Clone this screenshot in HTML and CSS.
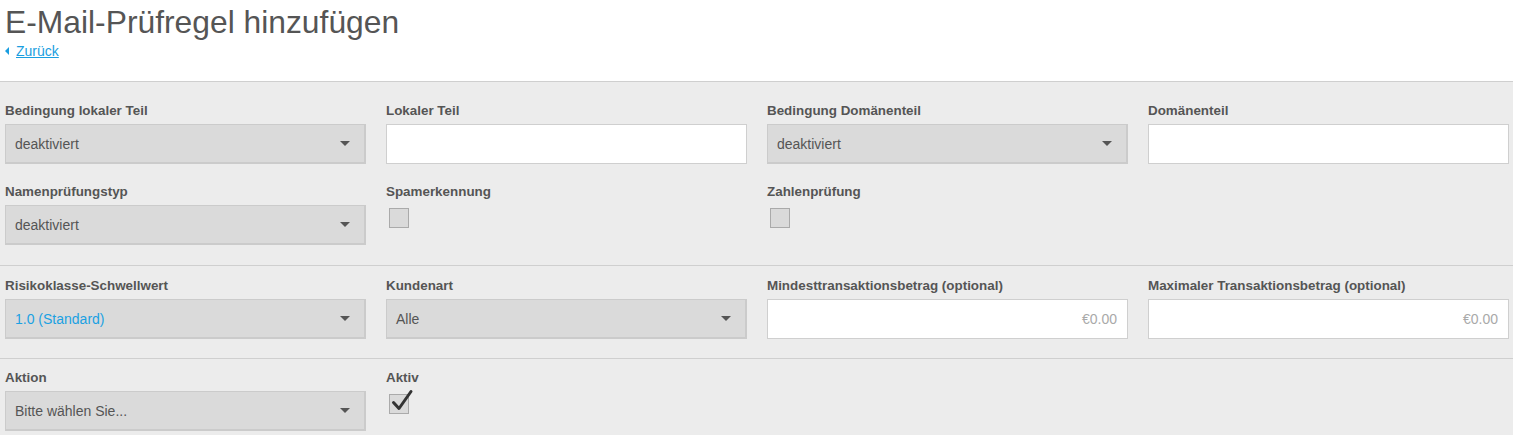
FILE: index.html
```html
<!DOCTYPE html>
<html lang="de">
<head>
<meta charset="utf-8">
<title>E-Mail-Prüfregel hinzufügen</title>
<link rel="stylesheet" href="styles.css">
</head>
<body>
<header class="page-head">
  <h1 class="title">E-Mail-Prüfregel hinzufügen</h1>
  <a class="back" href="#"><span class="back-arrow"></span><span class="back-text">Zurück</span></a>
</header>
<main class="form">
  <section class="section first">
    <div class="grid">
      <div class="field">
        <label class="label">Bedingung lokaler Teil</label>
        <div class="select"><span class="select-value">deaktiviert</span><span class="caret"></span></div>
      </div>
      <div class="field">
        <label class="label">Lokaler Teil</label>
        <div class="input"></div>
      </div>
      <div class="field">
        <label class="label">Bedingung Domänenteil</label>
        <div class="select"><span class="select-value">deaktiviert</span><span class="caret"></span></div>
      </div>
      <div class="field">
        <label class="label">Domänenteil</label>
        <div class="input"></div>
      </div>
      <div class="field">
        <label class="label">Namenprüfungstyp</label>
        <div class="select"><span class="select-value">deaktiviert</span><span class="caret"></span></div>
      </div>
      <div class="field">
        <label class="label">Spamerkennung</label>
        <div class="checkbox"></div>
      </div>
      <div class="field">
        <label class="label">Zahlenprüfung</label>
        <div class="checkbox"></div>
      </div>
    </div>
  </section>
  <section class="section">
    <div class="grid">
      <div class="field">
        <label class="label">Risikoklasse-Schwellwert</label>
        <div class="select"><span class="select-value blue">1.0 (Standard)</span><span class="caret"></span></div>
      </div>
      <div class="field">
        <label class="label">Kundenart</label>
        <div class="select"><span class="select-value">Alle</span><span class="caret"></span></div>
      </div>
      <div class="field">
        <label class="label">Mindesttransaktionsbetrag (optional)</label>
        <div class="input"><span class="placeholder">€0.00</span></div>
      </div>
      <div class="field">
        <label class="label">Maximaler Transaktionsbetrag (optional)</label>
        <div class="input"><span class="placeholder">€0.00</span></div>
      </div>
    </div>
  </section>
  <section class="section last">
    <div class="grid">
      <div class="field">
        <label class="label">Aktion</label>
        <div class="select"><span class="select-value">Bitte wählen Sie...</span><span class="caret"></span></div>
      </div>
      <div class="field">
        <label class="label">Aktiv</label>
        <div class="checkbox checked">
          <svg class="check" viewBox="0 0 24 24" width="24" height="24"><path d="M3.5 13.5 L9 19.5 L21 2.5" fill="none" stroke="#333" stroke-width="3" stroke-linecap="round" stroke-linejoin="round"/></svg>
        </div>
      </div>
    </div>
  </section>
</main>
</body>
</html>
```
FILE: styles.css
```css
* { box-sizing: border-box; }
html, body { margin: 0; padding: 0; }
body {
  font-family: "Liberation Sans", Arial, sans-serif;
  color: #555;
  background: #ececec;
  width: 1513px;
  height: 435px;
  overflow: hidden;
}
.page-head {
  background: #fff;
  padding: 4px 5px 0 5px;
  height: 82px;
  border-bottom: 1px solid #cfcfcf;
}
.title {
  margin: 0;
  font-weight: normal;
  font-size: 31.8px;
  line-height: 36px;
  color: #555;
}
.back {
  display: inline-flex;
  align-items: center;
  margin-top: 3px;
  color: #1a9ee0;
  font-size: 14px;
  line-height: 16px;
  text-decoration: none;
}
.back-arrow {
  width: 0; height: 0;
  border-top: 4px solid transparent;
  border-bottom: 4px solid transparent;
  border-right: 4px solid #1a9ee0;
  margin-right: 7px;
}
.back-text { text-decoration: underline; }
.section {
  padding: 11px 4px 19px 5px;
  border-bottom: 1px solid #cfcfcf;
}
.section.first { padding-top: 20px; padding-bottom: 20px; }
.section.last { border-bottom: none; padding-top: 10px; }
.grid {
  display: grid;
  grid-template-columns: repeat(4, 1fr);
  column-gap: 20px;
  row-gap: 19px;
}
.field {
  display: flex;
  flex-direction: column;
  min-height: 62px;
}
.label {
  font-weight: bold;
  font-size: 13.4px;
  line-height: 16px;
  margin-bottom: 6px;
  color: #555;
  padding-top: 1px;
  height: 16px;
}
.select {
  height: 40px;
  background: #dadada;
  border: 1px solid #cbcbcb;
  border-right-width: 2px;
  border-bottom-width: 2px;
  display: flex;
  align-items: center;
  justify-content: space-between;
  padding: 0 14px 0 9px;
}
.select-value {
  font-size: 14px;
  color: #555;
}
.select-value.blue { color: #1ba1e2; }
.caret {
  width: 0; height: 0;
  border-left: 5px solid transparent;
  border-right: 5px solid transparent;
  border-top: 5px solid #555;
}
.input {
  height: 40px;
  background: #fff;
  border: 1px solid #cfcfcf;
  display: flex;
  align-items: center;
  justify-content: flex-end;
  padding: 0 10px;
}
.placeholder {
  font-size: 14px;
  color: #a9a9a9;
}
.checkbox {
  width: 20px;
  height: 20px;
  margin: 3px 0 0 3px;
  background: #dadada;
  border: 1px solid #aaa;
  position: relative;
}
.check {
  position: absolute;
  left: 0;
  top: -6px;
}
```
